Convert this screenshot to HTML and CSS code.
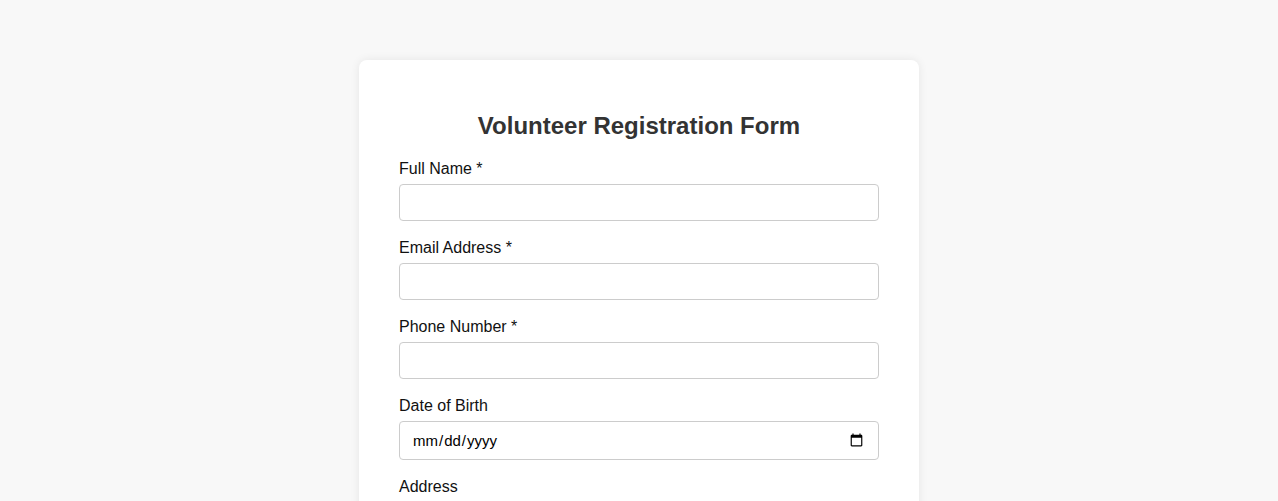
FILE: index.html
```html
<!DOCTYPE html>
<html lang="en">
<head>
<meta charset="utf-8">
<title>Volunteer Registration Form</title>
<link rel="stylesheet" href="styles.css">
</head>
<body>
<div class="card">
  <h2 class="title">Volunteer Registration Form</h2>
  <form class="form">
    <div class="group">
      <label class="label" for="name">Full Name *</label>
      <input class="field" id="name" type="text">
    </div>
    <div class="group">
      <label class="label" for="email">Email Address *</label>
      <input class="field" id="email" type="email">
    </div>
    <div class="group">
      <label class="label" for="phone">Phone Number *</label>
      <input class="field" id="phone" type="tel">
    </div>
    <div class="group">
      <label class="label" for="dob">Date of Birth</label>
      <input class="field date" id="dob" type="date">
    </div>
    <div class="group">
      <label class="label" for="address">Address</label>
      <textarea class="field area" id="address" rows="4"></textarea>
    </div>
  </form>
</div>
</body>
</html>
```
FILE: styles.css
```css
html, body {
  margin: 0;
  padding: 0;
}
body {
  background: #f8f8f8;
  font-family: "Liberation Sans", Arial, sans-serif;
  padding: 60px 0 40px;
}
.card {
  width: 560px;
  box-sizing: border-box;
  margin: 0 auto;
  background: #fff;
  border-radius: 8px;
  box-shadow: 0 0 10px rgba(0, 0, 0, 0.08);
  padding: 40px;
}
.title {
  margin: 12px 0 20px;
  font-size: 24px;
  font-weight: bold;
  color: #333;
  text-align: center;
}
.group {
  margin-bottom: 18px;
}
.label {
  display: block;
  font-size: 16px;
  color: #111;
  margin-bottom: 6px;
}
.field {
  display: block;
  width: 100%;
  height: 37px;
  box-sizing: border-box;
  padding: 8px 12px;
  border: 1px solid #ccc;
  border-radius: 4px;
  font-family: "Liberation Sans", Arial, sans-serif;
  font-size: 16px;
  background: #fff;
  color: #000;
}
.date {
  height: 39px;
  font-size: 15px;
}
.area {
  height: auto;
  resize: vertical;
}
```
